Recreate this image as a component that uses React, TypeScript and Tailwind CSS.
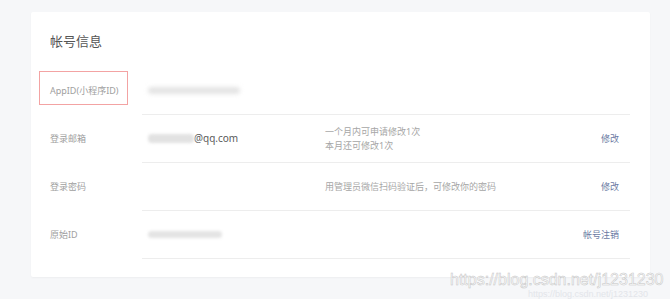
export default function App() {
  const rows = [
    {
      label: "AppID(小程序ID)",
      value: <div className="h-[7px] w-[92px] rounded-full bg-[#e4e4e4] blur-[2px]" />,
      desc: null,
      action: null,
      marked: true,
    },
    {
      label: "登录邮箱",
      value: (
        <div className="flex items-center">
          <div className="h-[9px] w-[46px] rounded-sm bg-[#e2e2e2] blur-[1.5px]" />
          <span className="text-[10px] text-[#5a5a5a]">@qq.com</span>
        </div>
      ),
      desc: (
        <div className="leading-[14px]">
          <div>一个月内可申请修改1次</div>
          <div>本月还可修改1次</div>
        </div>
      ),
      action: "修改",
    },
    {
      label: "登录密码",
      value: null,
      desc: <div>用管理员微信扫码验证后，可修改你的密码</div>,
      action: "修改",
    },
    {
      label: "原始ID",
      value: <div className="h-[7px] w-[74px] rounded-full bg-[#e4e4e4] blur-[1.5px]" />,
      desc: null,
      action: "帐号注销",
    },
  ];

  return (
    <div
      className="relative h-[299px] w-[670px] overflow-hidden bg-[#f6f7f9] pt-[12px] pl-[31px]"
      style={{ fontFamily: '"Noto Sans", "Noto Sans CJK SC", sans-serif' }}
    >
      <div className="h-[265px] w-[619px] rounded-[2px] bg-white pl-[19px] pr-[20px] pt-[19px] shadow-[0_1px_2px_rgba(0,0,0,0.04)]">
        <div className="h-[20px] text-[13px] leading-[20px] text-[#555]">帐号信息</div>
        <div className="mt-[16px]">
          {rows.map((r) => (
            <div key={r.label} className="flex h-[48px]">
              <div className="relative flex w-[92px] items-center text-[9px] text-[#a0a0a0]">
                {r.marked && (
                  <div className="absolute left-[-11px] top-[4px] h-[34px] w-[89px] border border-[#f3a3a3]" />
                )}
                {r.label}
              </div>
              <div className="flex flex-1 items-center border-b border-[#ededed]">
                <div className="w-[183px] pl-[6px]">{r.value}</div>
                <div className="flex-1 text-[9px] text-[#a6a6a6]">{r.desc}</div>
                {r.action && (
                  <div className="pr-[11px] text-[9px] text-[#6b7aa3]">{r.action}</div>
                )}
              </div>
            </div>
          ))}
        </div>
      </div>

      {/* watermark */}
      <div
        className="absolute left-[450px] top-[272px] whitespace-nowrap text-[16px] leading-[16px] text-white [-webkit-text-stroke:0.5px_#c4c4c4]"
        style={{ fontFamily: '"Liberation Sans", sans-serif' }}
      >
        https://blog.csdn.net/j1231230
      </div>
      <div
        className="absolute left-[528px] top-[289px] whitespace-nowrap text-[9px] leading-[10px] text-[#e3e5ea]"
        style={{ fontFamily: '"Liberation Sans", sans-serif' }}
      >
        https://blog.csdn.net/j1231230
      </div>
    </div>
  );
}
